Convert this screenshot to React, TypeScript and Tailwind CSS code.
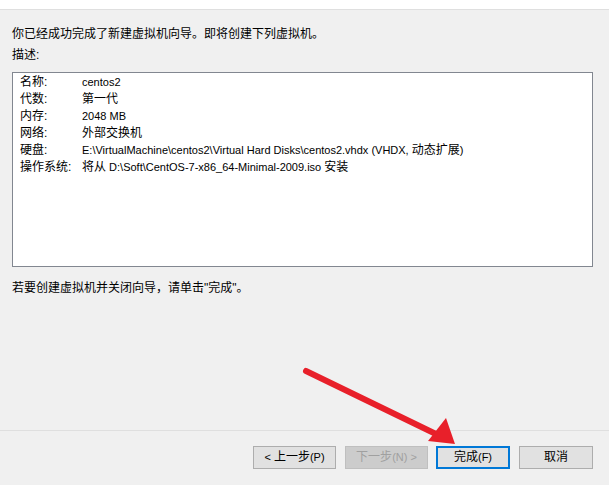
import React from "react";

const font = { fontFamily: '"Liberation Sans", "Noto Sans CJK SC", sans-serif' };

function L({ children }: { children: React.ReactNode }) {
  return <span className="text-[11px]">{children}</span>;
}

const rows: [string, React.ReactNode][] = [
  ["名称:", <L>centos2</L>],
  ["代数:", "第一代"],
  ["内存:", <L>2048 MB</L>],
  ["网络:", "外部交换机"],
  [
    "硬盘:",
    <>
      <L>E:\VirtualMachine\centos2\Virtual Hard Disks\centos2.vhdx (VHDX, </L>动态扩展<L>)</L>
    </>,
  ],
  [
    "操作系统:",
    <>
      将从<L> D:\Soft\CentOS-7-x86_64-Minimal-2009.iso </L>安装
    </>,
  ],
];

export default function App() {
  return (
    <div
      className="relative w-[609px] h-[485px] bg-[#f0f0f0] flex flex-col overflow-hidden text-[12px] text-black"
      style={font}
    >
      <div className="h-[10px] bg-white border-b border-[#dfdfdf] shrink-0" />
      <div className="flex flex-col px-[12px] flex-1">
        <div className="mt-[17px] leading-[14px]">你已经成功完成了新建虚拟机向导。即将创建下列虚拟机。</div>
        <div className="mt-[7px] leading-[14px]">描述:</div>
        <div className="mt-[10px] w-[581px] h-[195px] bg-white border border-[#828790] pt-[1px] pl-[7px]">
          {rows.map(([k, v]) => (
            <div key={k} className="flex leading-[17px] h-[17px] whitespace-nowrap">
              <div className="w-[62px] shrink-0">{k}</div>
              <div>{v}</div>
            </div>
          ))}
        </div>
        <div className="mt-[14px] leading-[14px]">若要创建虚拟机并关闭向导，请单击"完成"。</div>
      </div>
      <div className="h-[55px] border-t border-[#dfdfdf] shrink-0 flex items-start justify-end pr-[16px] pt-[15px]">
        <button className="w-[83px] h-[23px] bg-[#e1e1e1] border border-[#adadad] leading-[21px] text-[12px]">
          <L>&lt; </L>上一步<L>(P)</L>
        </button>
        <button className="ml-[9px] w-[83px] h-[23px] bg-[#cccccc] border border-[#bfbfbf] text-[#a0a0a0] leading-[21px] text-[12px]">
          下一步<L>(N) &gt;</L>
        </button>
        <button className="ml-[8px] w-[74px] h-[23px] bg-[#e1e1e1] border-2 border-[#0078d7] leading-[19px] text-[12px]">
          完成<L>(F)</L>
        </button>
        <button className="ml-[9px] w-[74px] h-[23px] bg-[#e1e1e1] border border-[#adadad] leading-[21px] text-[12px]">
          取消
        </button>
      </div>
      <svg className="absolute left-0 top-0 pointer-events-none" width="609" height="485">
        <line x1="306" y1="371" x2="438" y2="435" stroke="#e8202a" strokeWidth="6" strokeLinecap="round" />
        <polygon points="455,444 428,441 446,418" fill="#e8202a" />
      </svg>
    </div>
  );
}
